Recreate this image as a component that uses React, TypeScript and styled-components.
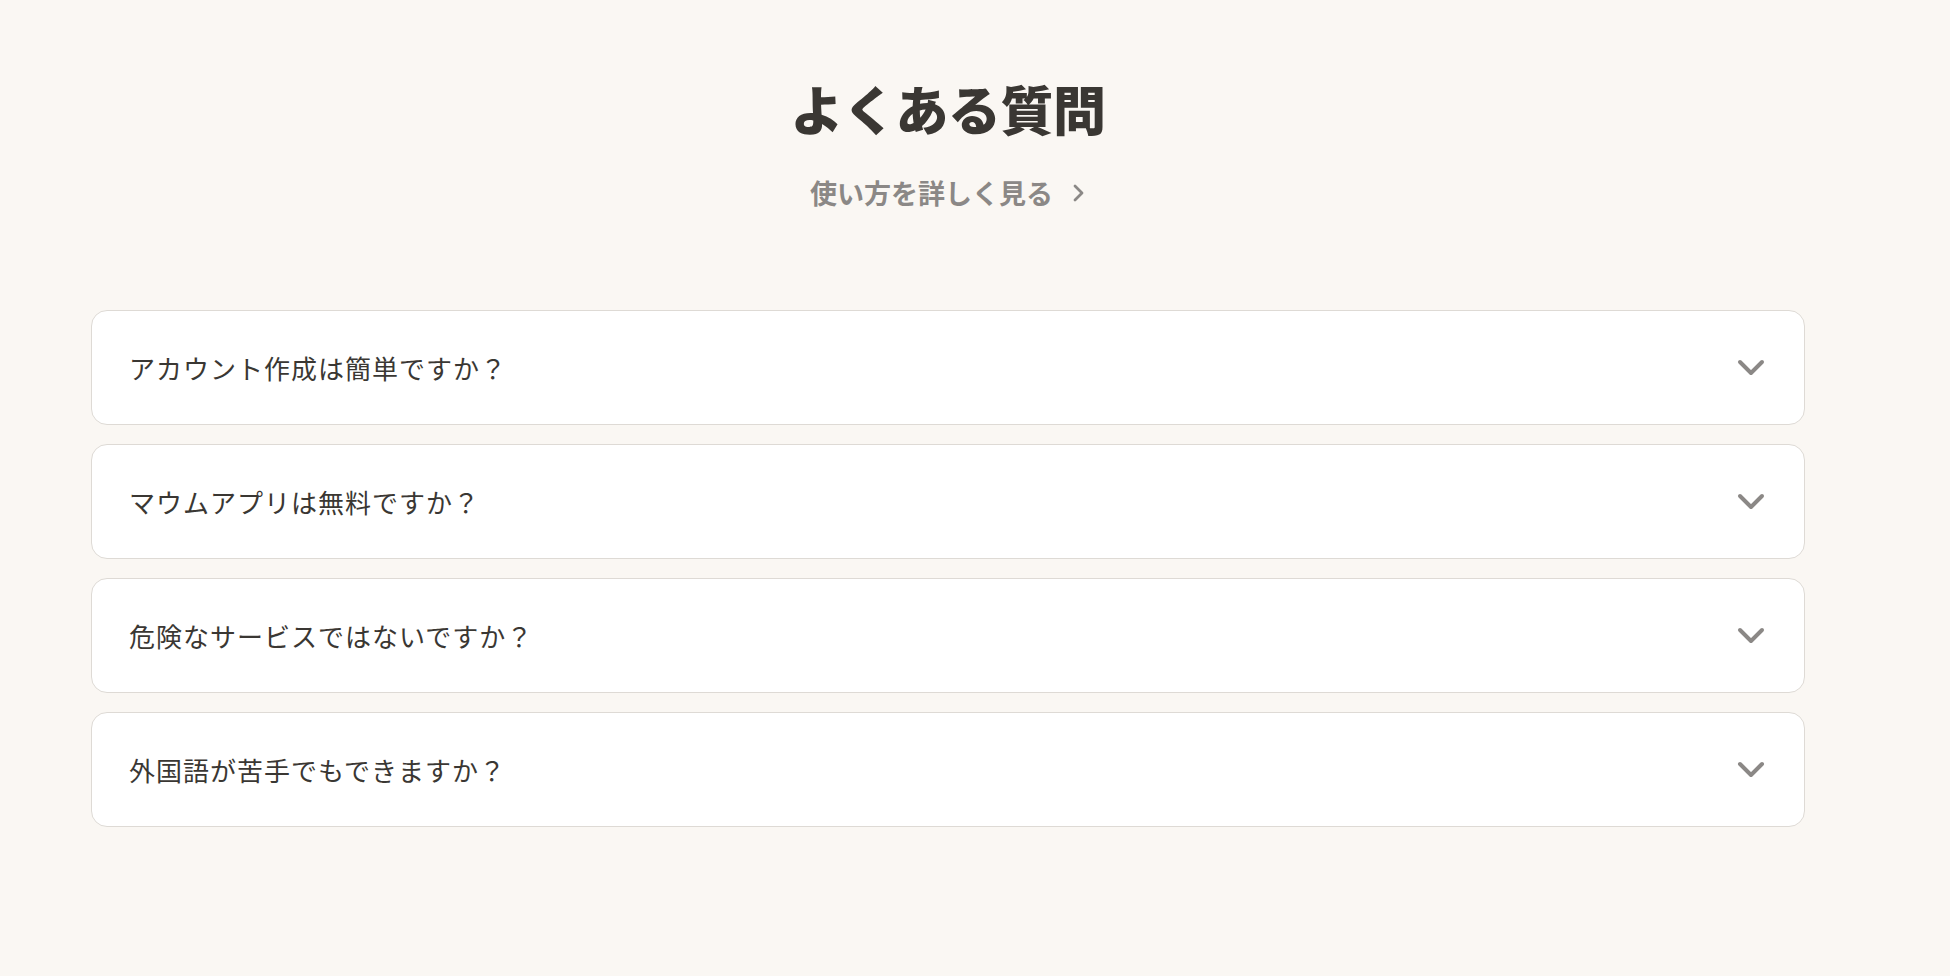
import React from "react";
import styled, { createGlobalStyle } from "styled-components";

const GlobalStyle = createGlobalStyle`
  body {
    margin: 0;
    background-color: #faf7f3;
    font-family: "Noto Sans CJK JP", "Noto Sans", sans-serif;
  }
`;

const questions = [
  "アカウント作成は簡単ですか？",
  "マウムアプリは無料ですか？",
  "危険なサービスではないですか？",
  "外国語が苦手でもできますか？",
];

const Chevron = () => (
  <svg width="30" height="20" viewBox="0 0 30 20" fill="none">
    <polyline
      points="4,4 15,15 26,4"
      stroke="#8b8886"
      strokeWidth="4"
      strokeLinecap="round"
      strokeLinejoin="round"
    />
  </svg>
);

const ArrowRight = () => (
  <svg width="14" height="18" viewBox="0 0 14 18" fill="none">
    <polyline
      points="3,2 10,9 3,16"
      stroke="#8b8886"
      strokeWidth="2.8"
      strokeLinecap="round"
      strokeLinejoin="round"
    />
  </svg>
);

const App = () => {
  return (
    <>
      <GlobalStyle />
      <Page>
        <Header>
          <Title>よくある質問</Title>
          <MoreLink href="#">
            使い方を詳しく見る
            <ArrowRight />
          </MoreLink>
        </Header>
        <FaqList>
          {questions.map((q) => (
            <FaqItem key={q}>
              <Question>{q}</Question>
              <Chevron />
            </FaqItem>
          ))}
        </FaqList>
      </Page>
    </>
  );
};

const Page = styled.div`
  min-height: 976px;
  box-sizing: border-box;
  padding: 76px 145px 0 91px;
`;

const Header = styled.div`
  display: flex;
  flex-direction: column;
  align-items: center;
`;

const Title = styled.h2`
  margin: 0;
  font-size: 53px;
  font-weight: 900;
  line-height: 64px;
  letter-spacing: -0.5px;
  color: #3a3733;
`;

const MoreLink = styled.a`
  margin-top: 33px;
  display: flex;
  align-items: center;
  gap: 19px;
  font-size: 27px;
  font-weight: 700;
  line-height: 40px;
  color: #8b8886;
  text-decoration: none;
`;

const FaqList = styled.div`
  margin-top: 97px;
  display: flex;
  flex-direction: column;
  gap: 19px;
`;

const FaqItem = styled.div`
  height: 115px;
  box-sizing: border-box;
  display: flex;
  align-items: center;
  justify-content: space-between;
  padding: 0 38px 0 37px;
  background-color: #ffffff;
  border: 1.5px solid #dedad5;
  border-radius: 16px;
`;

const Question = styled.div`
  font-size: 26px;
  font-weight: 400;
  letter-spacing: 1px;
  color: #3a3733;
`;

export default App;
